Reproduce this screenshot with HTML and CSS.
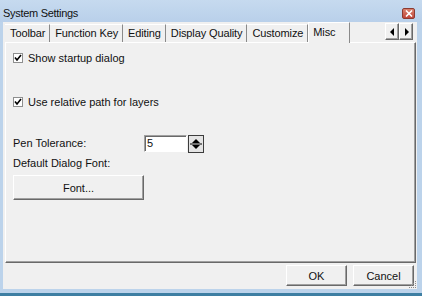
FILE: index.html
```html
<!DOCTYPE html>
<html lang="en">
<head>
    <meta charset="UTF-8">
    <meta name="viewport" content="width=device-width, initial-scale=1.0">
    <title>System Settings</title>
    <link rel="stylesheet" href="styles.css">
</head>
<body>
    <div class="window">
        <div class="titlebar">
            <span class="title">System Settings</span>
            <span class="close-btn">
                <svg width="8" height="7" viewBox="0 0 8 7">
                    <path d="M1 0.5 L7 6.5 M7 0.5 L1 6.5" stroke="#ffffff" stroke-width="1.6" fill="none"/>
                </svg>
            </span>
        </div>

        <div class="client">
            <div class="tabs">
                <div class="tab">Toolbar</div>
                <div class="tab">Function Key</div>
                <div class="tab">Editing</div>
                <div class="tab">Display Quality</div>
                <div class="tab">Customize</div>
                <div class="tab selected">Misc</div>
                <div class="tab-scroller">
                    <span class="scroll-btn">
                        <svg width="5" height="8" viewBox="0 0 5 8"><path d="M4 0 L0 4 L4 8 Z" fill="#000"/></svg>
                    </span>
                    <span class="scroll-btn">
                        <svg width="5" height="8" viewBox="0 0 5 8"><path d="M1 0 L5 4 L1 8 Z" fill="#000"/></svg>
                    </span>
                </div>
            </div>

            <div class="panel">
                <label class="check-row first">
                    <span class="checkbox">
                        <svg width="8" height="8" viewBox="0 0 8 8"><path d="M1 3.5 L3 6 L7 1" stroke="#000" stroke-width="1.6" fill="none"/></svg>
                    </span>
                    Show startup dialog
                </label>
                <label class="check-row second">
                    <span class="checkbox">
                        <svg width="8" height="8" viewBox="0 0 8 8"><path d="M1 3.5 L3 6 L7 1" stroke="#000" stroke-width="1.6" fill="none"/></svg>
                    </span>
                    Use relative path for layers
                </label>

                <div class="field-row">
                    <span class="field-label">Pen Tolerance:</span>
                    <span class="num-input">5</span>
                    <span class="spinner">
                        <svg width="14" height="16" viewBox="0 0 14 16">
                            <path d="M3 7 L7 3 L11 7 Z" fill="#000"/>
                            <path d="M1 8 H13" stroke="#000" stroke-width="1"/>
                            <path d="M3 9 L7 13 L11 9 Z" fill="#000"/>
                        </svg>
                    </span>
                </div>
                <div class="plain-label">Default Dialog Font:</div>
                <button class="win-btn font-btn">Font...</button>
            </div>

            <div class="footer">
                <button class="win-btn">OK</button>
                <button class="win-btn">Cancel</button>
            </div>

            <svg class="grip" width="10" height="10" viewBox="0 0 10 10">
                <g fill="#8c8c8c">
                    <rect x="8" y="2" width="1" height="1"/>
                    <rect x="6" y="4" width="1" height="1"/>
                    <rect x="8" y="4" width="1" height="1"/>
                    <rect x="4" y="6" width="1" height="1"/>
                    <rect x="6" y="6" width="1" height="1"/>
                    <rect x="8" y="6" width="1" height="1"/>
                    <rect x="2" y="8" width="1" height="1"/>
                    <rect x="4" y="8" width="1" height="1"/>
                    <rect x="6" y="8" width="1" height="1"/>
                    <rect x="8" y="8" width="1" height="1"/>
                </g>
            </svg>
        </div>

        <div class="bottom-frame"></div>
    </div>
</body>
</html>
```

FILE: styles.css
```css
:root {
    --frame: #bcd3eb;
    --face: #f0f0f0;
    --shadow: #a0a0a0;
    --dark: #696969;
    --text: #111111;
}

* {
    margin: 0;
    padding: 0;
    box-sizing: border-box;
}

body {
    font-family: "Liberation Sans", Arial, sans-serif;
    font-size: 11px;
    color: var(--text);
    background: var(--frame);
}

.window {
    width: 422px;
    height: 296px;
    display: flex;
    flex-direction: column;
    background: var(--frame);
}

.titlebar {
    height: 22px;
    display: flex;
    justify-content: space-between;
    align-items: flex-start;
    background: linear-gradient(#c6daef, #b9d0ea);
}

.title {
    margin: 6px 0 0 3px;
    font-size: 11px;
    letter-spacing: -0.3px;
    line-height: 14px;
}

.close-btn {
    width: 13px;
    height: 11px;
    margin: 8px 7px 0 0;
    display: flex;
    align-items: center;
    justify-content: center;
    background: linear-gradient(#d8826e, #c2463a);
    border: 1px solid #8c3a30;
    border-radius: 2px;
}

.client {
    position: relative;
    flex: 1;
    margin: 0 5px 0 3px;
    background: var(--face);
    display: flex;
    flex-direction: column;
}

.tabs {
    height: 20px;
    display: flex;
    align-items: flex-end;
    padding-left: 2px;
}

.tab {
    height: 18px;
    line-height: 17px;
    padding: 0 4px 0 5px;
    letter-spacing: -0.12px;
    border-top: 1px solid #ffffff;
    border-right: 1px solid #8a8a8a;
    white-space: nowrap;
}

.tab.selected {
    height: 21px;
    width: 42px;
    line-height: 18px;
    padding-left: 4px;
    margin-bottom: -1px;
    background: var(--face);
    border-left: 1px solid #ffffff;
    position: relative;
}

.tab-scroller {
    margin-left: auto;
    margin-right: 4px;
    margin-bottom: 2px;
    display: flex;
}

.scroll-btn {
    width: 14px;
    height: 17px;
    display: flex;
    align-items: center;
    justify-content: center;
    border-top: 1px solid #ffffff;
    border-left: 1px solid #ffffff;
    border-right: 1px solid var(--dark);
    border-bottom: 1px solid var(--dark);
    box-shadow: inset -1px -1px 0 var(--shadow);
}

.panel {
    height: 221px;
    margin: 0 1px 0 2px;
    padding-left: 7px;
    border-top: 1px solid #ffffff;
    border-left: 1px solid #ffffff;
    border-right: 1px solid var(--dark);
    border-bottom: 1px solid var(--dark);
    box-shadow: inset -1px -1px 0 var(--shadow);
    display: flex;
    flex-direction: column;
    align-items: flex-start;
}

.check-row {
    height: 16px;
    display: flex;
    align-items: center;
    gap: 5px;
}

.check-row.first {
    margin-top: 7px;
}

.check-row.second {
    margin-top: 28px;
}

.checkbox {
    width: 10px;
    height: 10px;
    display: flex;
    align-items: center;
    justify-content: center;
    background: #ffffff;
    border: 1px solid #8e8f8f;
}

.field-row {
    margin-top: 25px;
    height: 18px;
    display: flex;
    align-items: flex-start;
}

.field-label {
    width: 131px;
    line-height: 17px;
}

.num-input {
    width: 43px;
    height: 17px;
    line-height: 14px;
    padding-left: 2px;
    background: #ffffff;
    border-top: 1px solid var(--shadow);
    border-left: 1px solid var(--shadow);
    border-right: 1px solid #ffffff;
    border-bottom: 1px solid #ffffff;
    box-shadow: inset 1px 1px 0 var(--dark);
}

.spinner {
    width: 16px;
    height: 18px;
    margin-left: 1px;
    display: flex;
    align-items: center;
    justify-content: center;
    background: #e4e4e4;
    border: 1px solid #3c3c3c;
}

.plain-label {
    margin-top: 2px;
    line-height: 16px;
}

.win-btn {
    font: inherit;
    color: var(--text);
    background: var(--face);
    border-top: 1px solid #ffffff;
    border-left: 1px solid #ffffff;
    border-right: 1px solid var(--dark);
    border-bottom: 1px solid var(--dark);
    box-shadow: inset -1px -1px 0 var(--shadow);
}

.font-btn {
    width: 131px;
    height: 25px;
    margin-top: 4px;
}

.footer {
    height: 26px;
    display: flex;
    justify-content: flex-end;
    gap: 6px;
    padding: 2px 3px 0 0;
}

.footer .win-btn {
    width: 61px;
    height: 21px;
}

.grip {
    position: absolute;
    right: 0;
    bottom: 0;
}

.bottom-frame {
    height: 7px;
    background: linear-gradient(var(--frame) 0 4px, #3e7fa3 4px);
}
```
